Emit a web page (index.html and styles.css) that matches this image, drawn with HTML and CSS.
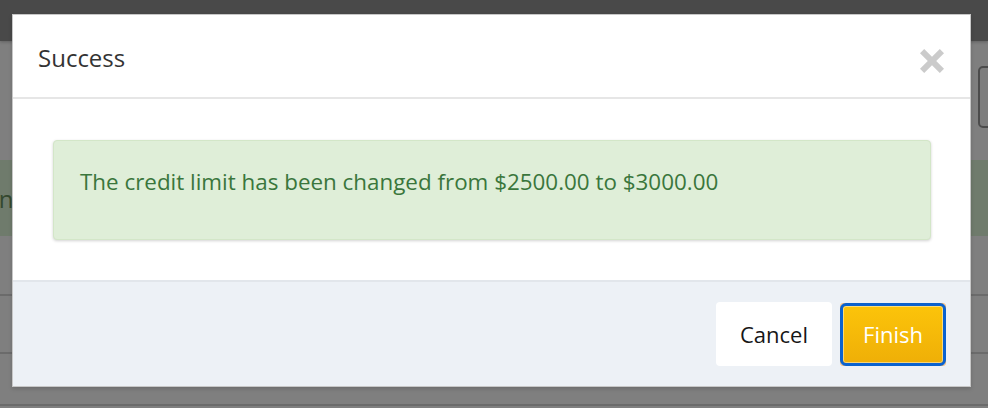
FILE: index.html
```html
<!DOCTYPE html>
<html lang="en">
<head>
<meta charset="utf-8">
<title>Success</title>
<link rel="stylesheet" href="styles.css">
</head>
<body>
  <div class="page">
    <div class="nav"></div>
    <div class="toolbar"><span class="ghost-btn"></span></div>
    <div class="band"><span class="band-text">been</span></div>
    <div class="row row-1"></div>
    <div class="row row-2"></div>
    <div class="row row-3"></div>
  </div>

  <div class="modal" role="dialog" aria-labelledby="modal-title">
    <div class="modal-header">
      <h4 class="modal-title" id="modal-title">Success</h4>
      <button class="close" type="button" aria-label="Close">
        <svg class="close-icon" viewBox="0 0 24 24" width="24" height="24" aria-hidden="true">
          <path d="M0 4.2 L4.2 0 L12 7.8 L19.8 0 L24 4.2 L16.2 12 L24 19.8 L19.8 24 L12 16.2 L4.2 24 L0 19.8 L7.8 12 Z" fill="#cbcbcb"/>
        </svg>
      </button>
    </div>
    <div class="modal-body">
      <div class="alert-success">The credit limit has been changed from $2500.00 to $3000.00</div>
    </div>
    <div class="modal-footer">
      <button class="btn btn-cancel" type="button">Cancel</button>
      <span class="focus-ring"><button class="btn btn-finish" type="button">Finish</button></span>
    </div>
  </div>
</body>
</html>
```

FILE: styles.css
```css
html, body {
  margin: 0;
  padding: 0;
}

body {
  width: 988px;
  height: 408px;
  overflow: hidden;
  background: #7f7f7f;
  font-family: "Open Sans", "Noto Sans", "Liberation Sans", sans-serif;
  position: relative;
}

.page {
  display: flex;
  flex-direction: column;
}

.nav {
  height: 41px;
  background: #494949;
  box-shadow: 0 1px 3px rgba(0, 0, 0, 0.25);
}

.toolbar {
  height: 119px;
  display: flex;
  justify-content: flex-end;
  align-items: flex-start;
}

.ghost-btn {
  margin-top: 25px;
  margin-right: -24px;
  width: 30px;
  height: 58px;
  border: 2px solid #4c4c4c;
  border-radius: 5px;
  background: #7d7d7d;
}

.band {
  height: 76px;
  background: #6f7b6c;
  display: flex;
  align-items: center;
}

.band-text {
  margin-left: -43px;
  font-size: 24px;
  color: #34482f;
  white-space: nowrap;
}

.row {
  border-bottom: 2px solid #6b6b6b;
}

.row-1 { height: 58px; }
.row-2 { height: 56px; }
.row-3 { height: 50px; }

.modal {
  position: absolute;
  left: 12px;
  top: 14px;
  width: 959px;
  box-sizing: border-box;
  border: 1px solid rgba(0, 0, 0, 0.22);
  background: #fff;
  box-shadow: 0 2px 4px rgba(0, 0, 0, 0.15);
}

.modal-header {
  display: flex;
  justify-content: space-between;
  align-items: flex-start;
  padding: 26px 26px 23px 25px;
  border-bottom: 2px solid #e6e6e6;
}

.modal-title {
  margin: 0;
  font-size: 24px;
  line-height: 33px;
  font-weight: 400;
  color: #333;
}

.close {
  margin-top: 8px;
  padding: 0;
  border: 0;
  background: transparent;
  width: 24px;
  height: 24px;
  display: flex;
}

.modal-body {
  padding: 41px 39px 40px 40px;
}

.alert-success {
  padding: 24px 26px 41px 26px;
  background: #dfeed8;
  border: 1px solid #d3e6c8;
  border-radius: 4px;
  box-shadow: 0 1px 3px rgba(0, 0, 0, 0.18);
  color: #3a763c;
  font-size: 22.4px;
  line-height: 33px;
}

.modal-footer {
  height: 106px;
  box-sizing: border-box;
  border-top: 2px solid #e2e6eb;
  background: #edf1f6;
  display: flex;
  justify-content: flex-end;
  align-items: center;
  gap: 8px;
  padding: 0 24px 0 0;
}

.btn {
  font-family: "Open Sans", "Noto Sans", "Liberation Sans", sans-serif;
  font-size: 22px;
  line-height: 30px;
  cursor: pointer;
}

.btn-cancel {
  width: 116px;
  height: 64px;
  border: 0;
  border-radius: 4px;
  background: #fff;
  color: #161616;
  padding: 0;
}

.focus-ring {
  display: flex;
  border: 1px solid #f8bb72;
  border-radius: 3px;
}

.btn-finish {
  margin: -1px;
  width: 106px;
  height: 63px;
  box-sizing: border-box;
  border: 3px solid #0b62cf;
  border-radius: 6px;
  background: linear-gradient(#fcc40a, #efaf07);
  box-shadow: inset 0 0 0 1px rgba(255, 255, 255, 0.45);
  color: #fff;
  padding: 0;
}
```
